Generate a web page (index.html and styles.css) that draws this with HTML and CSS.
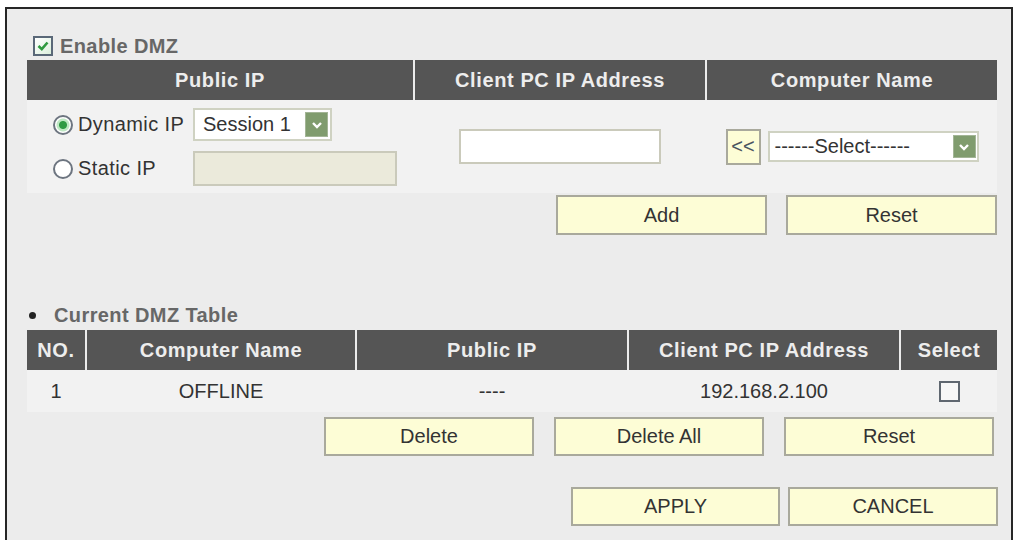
FILE: index.html
```html
<!DOCTYPE html>
<html lang="en">
<head>
    <meta charset="UTF-8">
    <title>DMZ</title>
    <link rel="stylesheet" href="styles.css">
</head>
<body>
    <div class="frame">
        <div class="title">
            <span class="check">
                <svg width="16" height="16" viewBox="0 0 16 16"><polyline points="3.5,8 6.8,11.2 12.5,4.5" fill="none" stroke="#2e9a3e" stroke-width="2.6"/></svg>
            </span>
            Enable DMZ
        </div>

        <div class="grid3 head">
            <div>Public IP</div>
            <div>Client PC IP Address</div>
            <div>Computer Name</div>
        </div>
        <div class="grid3 body">
            <div class="cell-public">
                <div class="ip-line line1">
                    <label class="ip-choice"><span class="radio on"></span>Dynamic IP</label>
                    <div class="select session">
                        <span>Session 1</span>
                        <span class="arrow"><svg width="14" height="14" viewBox="0 0 14 14"><polyline points="3,5 7,9 11,5" fill="none" stroke="#fff" stroke-width="2.4"/></svg></span>
                    </div>
                </div>
                <div class="ip-line line2">
                    <label class="ip-choice"><span class="radio"></span>Static IP</label>
                    <input type="text" class="field static" disabled>
                </div>
            </div>
            <div class="cell-center">
                <input type="text" class="field client">
            </div>
            <div class="cell-center">
                <button class="btn small">&lt;&lt;</button>
                <div class="select computer">
                    <span>------Select------</span>
                    <span class="arrow"><svg width="14" height="14" viewBox="0 0 14 14"><polyline points="3,5 7,9 11,5" fill="none" stroke="#fff" stroke-width="2.4"/></svg></span>
                </div>
            </div>
        </div>
        <div class="actions add-row">
            <button class="btn">Add</button>
            <button class="btn">Reset</button>
        </div>

        <div class="title list-title"><span class="bullet"></span>Current DMZ Table</div>
        <div class="grid5 head">
            <div>NO.</div>
            <div>Computer Name</div>
            <div>Public IP</div>
            <div>Client PC IP Address</div>
            <div>Select</div>
        </div>
        <div class="grid5 row">
            <div>1</div>
            <div>OFFLINE</div>
            <div>----</div>
            <div>192.168.2.100</div>
            <div><span class="box"></span></div>
        </div>
        <div class="actions del-row">
            <button class="btn">Delete</button>
            <button class="btn">Delete All</button>
            <button class="btn">Reset</button>
        </div>
        <div class="actions apply-row">
            <button class="btn apply">APPLY</button>
            <button class="btn">CANCEL</button>
        </div>
    </div>
</body>
</html>
```

FILE: styles.css
```css
* {
    box-sizing: border-box;
}
body {
    margin: 0;
    background: #fff;
    font-family: "Liberation Sans", Arial, sans-serif;
    font-size: 20px;
    color: #333;
}
.frame {
    width: 1008px;
    height: 533px;
    margin: 7px 0 0 5px;
    border: 2px solid #262626;
    border-bottom: none;
    padding: 23px 14px 0 20px;
    background: #ececec;
}
.title {
    display: flex;
    align-items: center;
    height: 28px;
    font-weight: bold;
    color: #676767;
    letter-spacing: 0.4px;
}
.check {
    width: 20px;
    height: 20px;
    margin: 0 7px 0 6px;
    border: 2px solid #5a6878;
    background: linear-gradient(135deg, #fff, #dcefdc);
    display: flex;
    align-items: center;
    justify-content: center;
}
.grid3 {
    display: grid;
    grid-template-columns: 386px 290px 290px;
    column-gap: 2px;
}
.grid5 {
    display: grid;
    grid-template-columns: 58px 268px 270px 270px 96px;
    column-gap: 2px;
}
.head {
    height: 40px;
}
.head > div {
    background: #555;
    color: #ededed;
    font-weight: bold;
    letter-spacing: 0.6px;
    display: flex;
    align-items: center;
    justify-content: center;
}
.body {
    height: 93px;
    background: #f2f2f2;
}
.cell-public {
    padding: 8px 0 0 26px;
    display: flex;
    flex-direction: column;
    gap: 10px;
}
.ip-line {
    display: flex;
    align-items: center;
}
.line1 {
    height: 33px;
}
.line2 {
    height: 35px;
}
.ip-choice {
    width: 140px;
    display: flex;
    align-items: center;
    gap: 5px;
    letter-spacing: 0.4px;
}
.radio {
    width: 20px;
    height: 20px;
    border-radius: 50%;
    border: 2px solid #6d7580;
    background: #fff;
}
.radio.on {
    background: radial-gradient(circle, #2f9a44 0 3.5px, #bfe8c4 4.5px 6px, #fff 7px);
}
.select {
    display: flex;
    align-items: center;
    justify-content: space-between;
    background: #fff;
    border: 2px solid #cfd2c2;
}
.session {
    width: 139px;
    height: 33px;
    padding: 0 2px 0 8px;
}
.computer {
    width: 211px;
    height: 31px;
    padding: 0 1px 0 5px;
}
.arrow {
    width: 23px;
    height: 25px;
    background: #809c6e;
    border: 1px solid #a3b596;
    display: flex;
    align-items: center;
    justify-content: center;
}
.computer .arrow {
    height: 23px;
}
.field {
    height: 35px;
    border: 2px solid #cacabb;
    background: #fff;
    font: inherit;
    margin: 0;
}
.field.static {
    width: 204px;
    background: #ebeadb;
}
.field.client {
    width: 202px;
}
.cell-center {
    display: flex;
    align-items: center;
    justify-content: center;
    gap: 7px;
}
.btn {
    font: inherit;
    color: #333;
    background: #fdfdd6;
    border: 2px solid #a9a99c;
    width: 211px;
    height: 40px;
    padding: 0;
}
.btn.small {
    width: 35px;
    height: 36px;
    color: #4a5560;
}
.actions {
    display: flex;
    justify-content: flex-end;
    gap: 19px;
}
.add-row {
    margin-top: 2px;
}
.list-title {
    margin-top: 66px;
    margin-bottom: 1px;
}
.bullet {
    width: 7px;
    height: 7px;
    border-radius: 50%;
    background: #222;
    margin: 0 18px 0 2px;
}
.row {
    height: 42px;
    background: #f2f2f2;
}
.row > div {
    display: flex;
    align-items: center;
    justify-content: center;
}
.box {
    width: 21px;
    height: 21px;
    border: 2px solid #5f6770;
    background: #f7f7f7;
}
.del-row {
    margin-top: 5px;
    gap: 20px;
    padding-right: 3px;
}
.del-row .btn {
    width: 210px;
    height: 39px;
}
.apply-row {
    margin-top: 31px;
    margin-right: -1px;
    gap: 8px;
}
.apply-row .btn {
    width: 210px;
    height: 39px;
}
.apply-row .apply {
    width: 209px;
}
```
